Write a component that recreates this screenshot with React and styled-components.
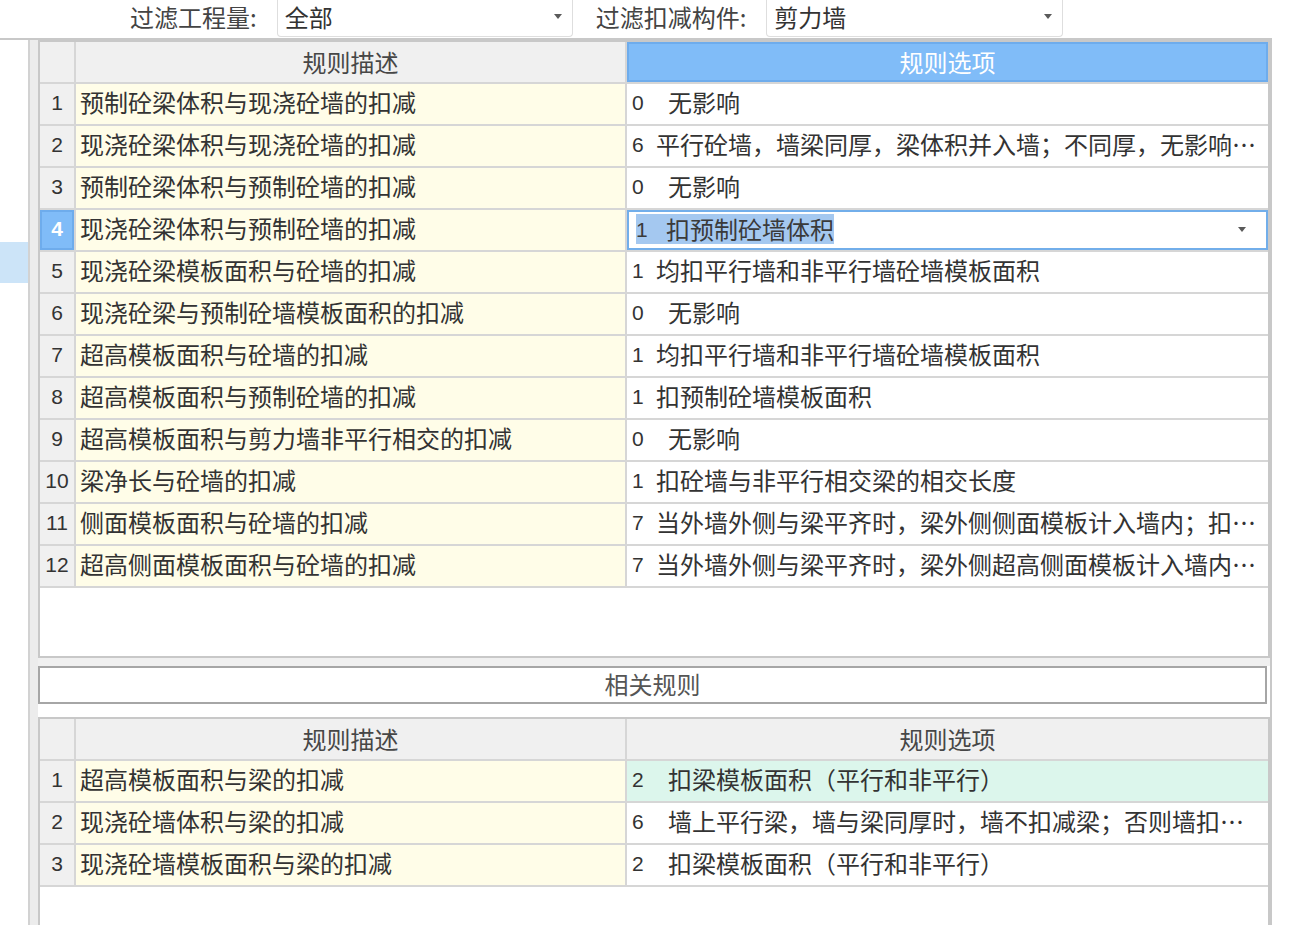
import React from 'react';
import styled, { createGlobalStyle } from 'styled-components';

const GlobalStyle = createGlobalStyle`
  html, body { margin: 0; padding: 0; background: #ffffff; }
  body {
    width: 1289px;
    height: 925px;
    overflow: hidden;
    font-family: "Noto Sans CJK SC", "Noto Sans", sans-serif;
    color: #333333;
  }
`;

const Page = styled.div`
  display: flex;
  flex-direction: column;
  width: 1289px;
  height: 925px;
`;

const Toolbar = styled.div`
  height: 38px;
  flex: none;
  display: flex;
  align-items: flex-start;
  padding-left: 130px;
`;

const FilterLabel = styled.span`
  font-size: 24px;
  line-height: 34px;
  color: #444444;
  margin-right: 20px;
  white-space: nowrap;
`;

const Select = styled.div`
  width: ${p => p.$w}px;
  height: 37px;
  box-sizing: border-box;
  border: 1px solid #dedede;
  border-top: none;
  border-radius: 0 0 4px 4px;
  display: flex;
  align-items: flex-start;
  justify-content: space-between;
  padding: 0 10px 0 7px;
  margin-right: 23px;
  font-size: 24px;
  line-height: 34px;
  color: #333333;
`;

const Arrow = styled.svg`
  width: 8px;
  height: 5px;
  margin-top: ${p => p.$top ?? 14}px;
  flex: none;
`;

const Main = styled.div`
  flex: 1;
  min-height: 0;
  width: 1272px;
  display: flex;
  border-top: 2px solid #c8c8c8;
`;

const LeftPanel = styled.div`
  width: 28px;
  flex: none;
  padding-top: 202px;
  box-sizing: border-box;
`;

const NavItem = styled.div`
  height: 41px;
  background: #cce4f8;
`;

const Splitter = styled.div`
  width: 10px;
  flex: none;
  box-sizing: border-box;
  border-left: 2px solid #d2d2d2;
  background: #ececec;
`;

const Pane = styled.div`
  width: 1234px;
  flex: none;
  box-sizing: border-box;
  border-right: 2px solid #c8c8c8;
  display: flex;
  flex-direction: column;
`;

const Grid = styled.div`
  box-sizing: border-box;
  border: 2px solid #c8c8c8;
  display: flex;
  flex-direction: column;
  ${p => (p.$fill ? 'flex: 1; min-height: 0; border-bottom: none;' : `height: ${p.$h}px; flex: none;`)}
  background: #ffffff;
  overflow: hidden;
`;

const Band = styled.div`
  height: 8px;
  flex: none;
  background: #f0f0f0;
`;

const Gap = styled.div`
  height: 13px;
  flex: none;
  background: #ffffff;
`;

const RelatedBox = styled.div`
  height: 38px;
  flex: none;
  box-sizing: border-box;
  margin-right: 3px;
  border: 2px solid #a6a6a6;
  background: #ffffff;
  text-align: center;
  font-size: 24px;
  line-height: 32px;
  color: #555555;
`;

const Row = styled.div`
  display: grid;
  grid-template-columns: 36px 551px 1fr;
  height: 42px;
  flex: none;
  box-sizing: border-box;
  border-bottom: 2px solid #d6d6d6;
`;

const HeadCell = styled.div`
  box-sizing: border-box;
  ${p => (p.$last ? '' : 'border-right: 2px solid #d6d6d6;')}
  background: ${p => (p.$blue ? '#80bcf8' : '#f0f0f0')};
  ${p => (p.$blue ? 'box-shadow: inset 0 0 0 2px #6eacec;' : '')}
  color: ${p => (p.$blue ? '#ffffff' : '#474747')};
  text-align: center;
  font-size: 24px;
  line-height: 40px;
`;

const NumCell = styled.div`
  box-sizing: border-box;
  border-right: 2px solid #d6d6d6;
  background: ${p => (p.$active ? '#80bcf8' : '#f0f0f0')};
  ${p => (p.$active ? 'box-shadow: inset 0 0 0 2px #6eacec;' : '')}
  display: flex;
  align-items: center;
  justify-content: center;
  padding-bottom: 2px;
  font-family: "Liberation Sans", Arial, sans-serif;
  font-size: 21px;
  font-weight: ${p => (p.$active ? 700 : 400)};
  color: ${p => (p.$active ? '#ffffff' : '#333333')};
`;

const DescCell = styled.div`
  box-sizing: border-box;
  border-right: 2px solid #d6d6d6;
  background: #fffde8;
  padding-left: 4px;
  font-size: 24px;
  line-height: 36px;
  white-space: nowrap;
  overflow: hidden;
  color: #333333;
`;

const OptCell = styled.div`
  box-sizing: border-box;
  background: ${p => (p.$mint ? '#dcf6ec' : '#ffffff')};
  padding: 0 4px 0 5px;
  font-size: 24px;
  line-height: 36px;
  white-space: nowrap;
  overflow: hidden;
  color: #333333;
`;

const Code = styled.span`
  display: inline-block;
  width: ${p => (p.$wide ? 36 : 24)}px;
  font-family: "Liberation Sans", Arial, sans-serif;
  font-size: 21px;
  vertical-align: 2px;
`;

const EditCell = styled.div`
  box-sizing: border-box;
  background: #ffffff;
  box-shadow: inset 0 0 0 2px #72aeea;
  display: flex;
  align-items: center;
  justify-content: space-between;
  padding: 0 22px 2px 9px;
  font-size: 24px;
  color: #3a3a3a;
`;

const Selection = styled.span`
  background: #a4c8f0;
  line-height: 29px;
  white-space: nowrap;
`;

const EditCode = styled.span`
  display: inline-block;
  width: 30px;
  font-family: "Liberation Sans", Arial, sans-serif;
  font-size: 21px;
  vertical-align: 2px;
`;

const Filler = styled.div`
  flex: 1;
`;

const DownArrow = ({ top }) => (
  <Arrow viewBox="0 0 8 5" $top={top}>
    <path d="M0 0 H8 L4 5 Z" fill="#5a5a5a" />
  </Arrow>
);

const topRows = [
  ['预制砼梁体积与现浇砼墙的扣减', '0', true, '无影响'],
  ['现浇砼梁体积与现浇砼墙的扣减', '6', false, '平行砼墙，墙梁同厚，梁体积并入墙；不同厚，无影响…'],
  ['预制砼梁体积与预制砼墙的扣减', '0', true, '无影响'],
  ['现浇砼梁体积与预制砼墙的扣减', '1', false, '扣预制砼墙体积', 'edit'],
  ['现浇砼梁模板面积与砼墙的扣减', '1', false, '均扣平行墙和非平行墙砼墙模板面积'],
  ['现浇砼梁与预制砼墙模板面积的扣减', '0', true, '无影响'],
  ['超高模板面积与砼墙的扣减', '1', false, '均扣平行墙和非平行墙砼墙模板面积'],
  ['超高模板面积与预制砼墙的扣减', '1', false, '扣预制砼墙模板面积'],
  ['超高模板面积与剪力墙非平行相交的扣减', '0', true, '无影响'],
  ['梁净长与砼墙的扣减', '1', false, '扣砼墙与非平行相交梁的相交长度'],
  ['侧面模板面积与砼墙的扣减', '7', false, '当外墙外侧与梁平齐时，梁外侧侧面模板计入墙内；扣…'],
  ['超高侧面模板面积与砼墙的扣减', '7', false, '当外墙外侧与梁平齐时，梁外侧超高侧面模板计入墙内…'],
];

const bottomRows = [
  ['超高模板面积与梁的扣减', '2', true, '扣梁模板面积（平行和非平行）', 'mint'],
  ['现浇砼墙体积与梁的扣减', '6', true, '墙上平行梁，墙与梁同厚时，墙不扣减梁；否则墙扣…'],
  ['现浇砼墙模板面积与梁的扣减', '2', true, '扣梁模板面积（平行和非平行）'],
];

const HeaderRow = ({ blue }) => (
  <Row>
    <HeadCell />
    <HeadCell>规则描述</HeadCell>
    <HeadCell $blue={blue} $last>规则选项</HeadCell>
  </Row>
);

const RuleRow = ({ index, row }) => {
  const [desc, code, wide, label, state] = row;
  const editing = state === 'edit';
  return (
    <Row>
      <NumCell $active={editing}>{index}</NumCell>
      <DescCell>{desc}</DescCell>
      {editing ? (
        <EditCell>
          <Selection>
            <EditCode>{code}</EditCode>
            {label}
          </Selection>
          <DownArrow top={0} />
        </EditCell>
      ) : (
        <OptCell $mint={state === 'mint'}>
          <Code $wide={wide}>{code}</Code>
          {label}
        </OptCell>
      )}
    </Row>
  );
};

export default function App() {
  return (
    <Page>
      <GlobalStyle />
      <Toolbar>
        <FilterLabel>过滤工程量:</FilterLabel>
        <Select $w={296}>
          <span>全部</span>
          <DownArrow />
        </Select>
        <FilterLabel>过滤扣减构件:</FilterLabel>
        <Select $w={297}>
          <span>剪力墙</span>
          <DownArrow />
        </Select>
      </Toolbar>
      <Main>
        <LeftPanel>
          <NavItem />
        </LeftPanel>
        <Splitter />
        <Pane>
          <Grid $h={618}>
            <HeaderRow blue />
            {topRows.map((r, i) => (
              <RuleRow key={i} index={i + 1} row={r} />
            ))}
            <Filler />
          </Grid>
          <Band />
          <RelatedBox>相关规则</RelatedBox>
          <Gap />
          <Grid $fill>
            <HeaderRow />
            {bottomRows.map((r, i) => (
              <RuleRow key={i} index={i + 1} row={r} />
            ))}
            <Filler />
          </Grid>
        </Pane>
      </Main>
    </Page>
  );
}
